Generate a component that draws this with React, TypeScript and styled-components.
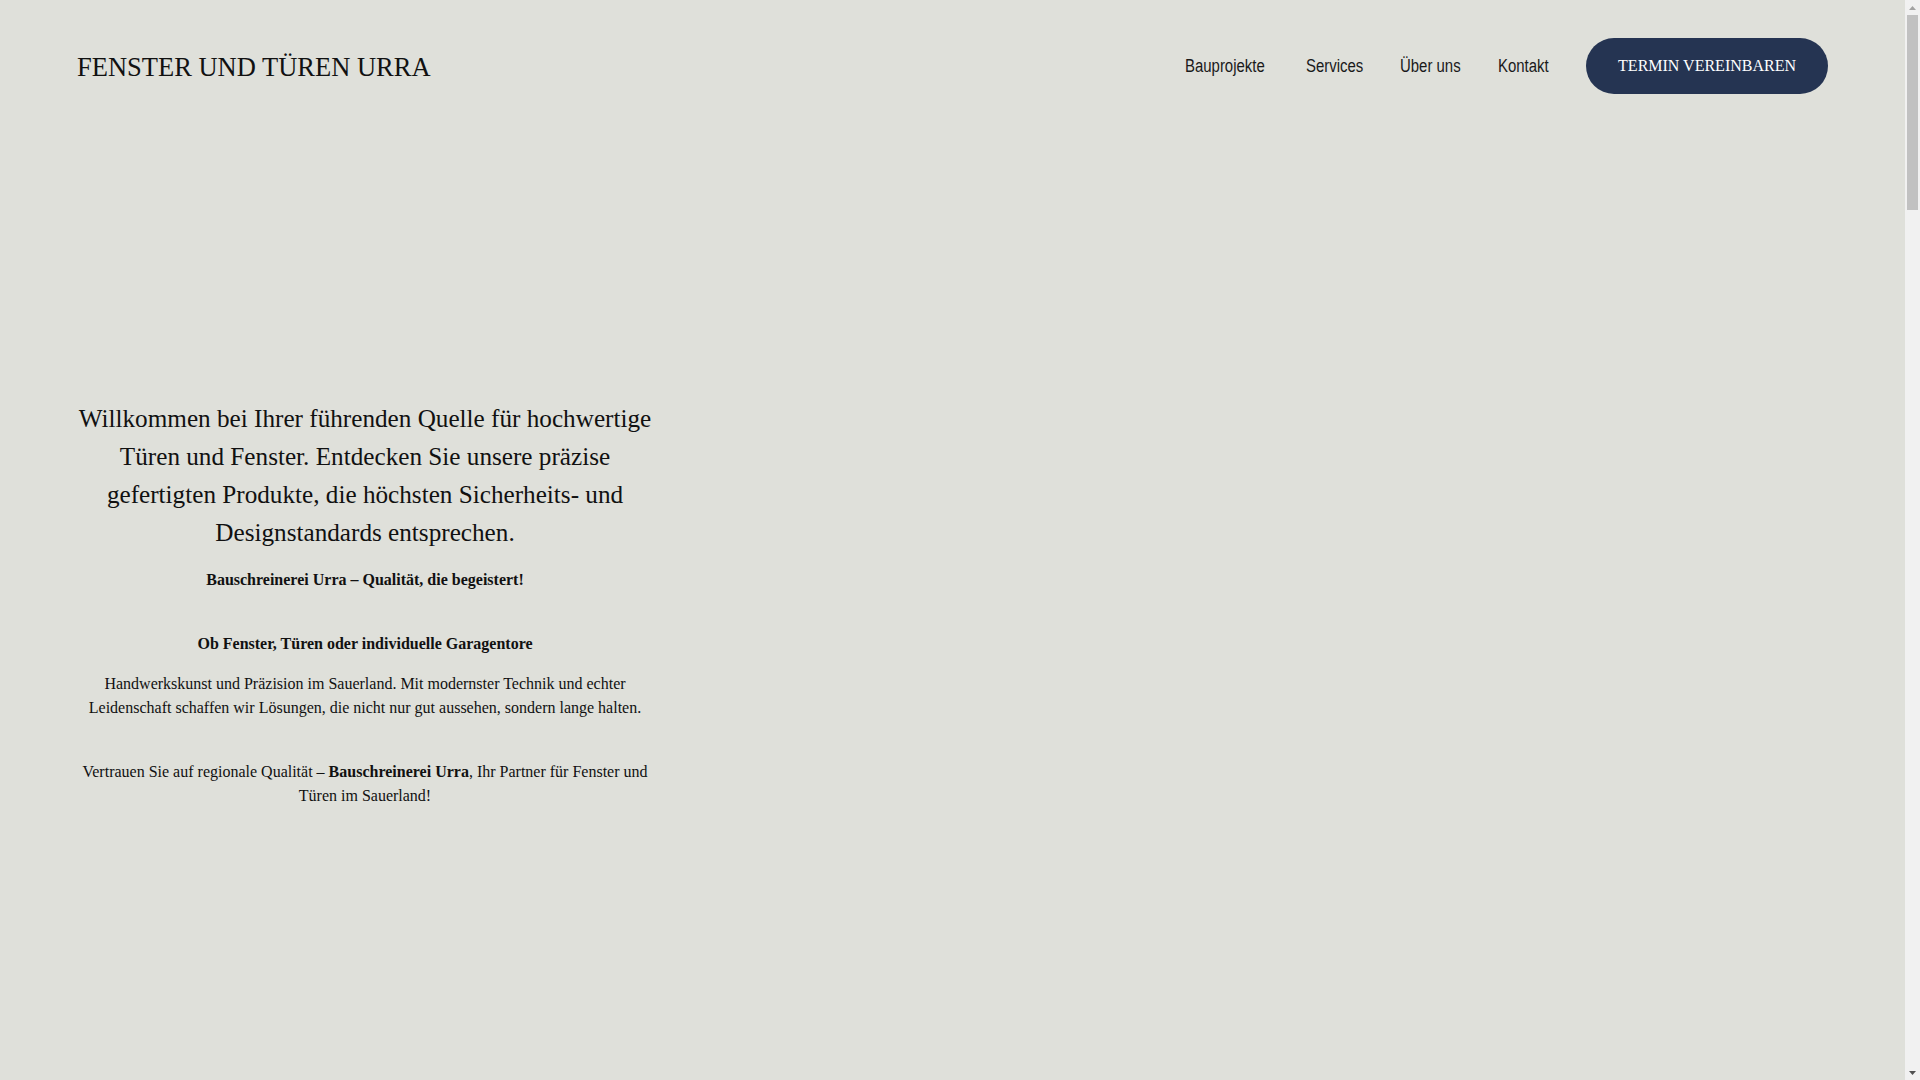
import React from "react";
import styled, { createGlobalStyle } from "styled-components";

const GlobalStyle = createGlobalStyle`
  html, body {
    margin: 0;
    padding: 0;
    background: #dfe0da;
  }
  body {
    font-family: "Liberation Serif", "Times New Roman", serif;
    color: #111111;
  }
  * { box-sizing: border-box; }
`;

const Page = styled.div`
  min-height: 5815px;
  background: #dfe0da;
  margin-right: 15px;
  padding: 0 77px;
`;

const Header = styled.header`
  display: flex;
  align-items: center;
  justify-content: space-between;
  padding: 38px 0;
`;

const Logo = styled.a`
  font-family: "Liberation Serif", "Times New Roman", serif;
  font-size: 26.5px;
  color: #111111;
  text-decoration: none;
  position: relative;
  top: 1px;
`;

const Nav = styled.nav`
  display: flex;
  align-items: center;
`;

const NavLinks = styled.ul`
  display: flex;
  align-items: center;
  gap: 25px;
  list-style: none;
  margin: 0 27px 0 0;
  padding: 0;
`;

const NavLink = styled.a`
  display: inline-block;
  font-family: "Liberation Sans Narrow", "Arial Narrow", "Liberation Sans", Arial, sans-serif;
  font-size: 18px;
  color: #1a1a1a;
  text-decoration: none;
  transform: scaleX(0.83);
  transform-origin: left center;
`;

const CtaButton = styled.a`
  display: inline-flex;
  align-items: center;
  justify-content: center;
  height: 56px;
  padding: 0 32px;
  border-radius: 28px;
  background: #253452;
  color: #ffffff;
  font-family: "Liberation Serif", "Times New Roman", serif;
  font-size: 16px;
  text-decoration: none;
`;

const Hero = styled.section`
  width: 576px;
  text-align: center;
  padding-top: 268px;
`;

const Lead = styled.p`
  font-size: 25.2px;
  line-height: 38px;
  margin: 0 0 16px;
`;

const Strong = styled.p<{ $gap?: number }>`
  font-size: 16px;
  line-height: 24px;
  font-weight: 700;
  margin: 0 0 ${(p) => p.$gap ?? 16}px;
`;

const Text = styled.p<{ $gap?: number }>`
  font-size: 16px;
  line-height: 24px;
  margin: 0 0 ${(p) => p.$gap ?? 16}px;
`;

/* Browser scrollbar drawn over the right edge */
const ScrollBar = styled.div`
  position: fixed;
  top: 0;
  right: 0;
  width: 15px;
  height: 100vh;
  background: #f1f1f1;
  display: flex;
  flex-direction: column;
`;

const ScrollArrow = styled.div`
  height: 15px;
  display: flex;
  align-items: center;
  justify-content: center;
  flex: none;
`;

const ScrollTrack = styled.div`
  flex: 1;
  padding: 0 2px;
`;

const ScrollThumb = styled.div`
  height: 195px;
  background: #c1c1c1;
`;

export default function App() {
  return (
    <>
      <GlobalStyle />
      <Page>
        <Header>
          <Logo href="#">FENSTER UND TÜREN URRA</Logo>
          <Nav>
            <NavLinks>
              <li><NavLink href="#">Bauprojekte</NavLink></li>
              <li><NavLink href="#">Services</NavLink></li>
              <li><NavLink href="#">Über uns</NavLink></li>
              <li><NavLink href="#">Kontakt</NavLink></li>
            </NavLinks>
            <CtaButton href="#">TERMIN VEREINBAREN</CtaButton>
          </Nav>
        </Header>
        <Hero>
          <Lead>
            Willkommen bei Ihrer führenden Quelle für hochwertige Türen und Fenster. Entdecken Sie unsere präzise gefertigten Produkte, die höchsten Sicherheits- und Designstandards entsprechen.
          </Lead>
          <Strong $gap={40}>Bauschreinerei Urra – Qualität, die begeistert!</Strong>
          <Strong $gap={16}>Ob Fenster, Türen oder individuelle Garagentore</Strong>
          <Text $gap={40}>
            Handwerkskunst und Präzision im Sauerland. Mit modernster Technik und echter Leidenschaft schaffen wir Lösungen, die nicht nur gut aussehen, sondern lange halten.
          </Text>
          <Text>
            Vertrauen Sie auf regionale Qualität – <b>Bauschreinerei Urra</b>, Ihr Partner für Fenster und Türen im Sauerland!
          </Text>
        </Hero>
      </Page>
      <ScrollBar aria-hidden="true">
        <ScrollArrow>
          <svg width="7" height="4" viewBox="0 0 7 4"><path d="M0 4 L3.5 0 L7 4 Z" fill="#a3a3a3" /></svg>
        </ScrollArrow>
        <ScrollTrack>
          <ScrollThumb />
        </ScrollTrack>
        <ScrollArrow>
          <svg width="7" height="4" viewBox="0 0 7 4"><path d="M0 0 L3.5 4 L7 0 Z" fill="#505050" /></svg>
        </ScrollArrow>
      </ScrollBar>
    </>
  );
}
